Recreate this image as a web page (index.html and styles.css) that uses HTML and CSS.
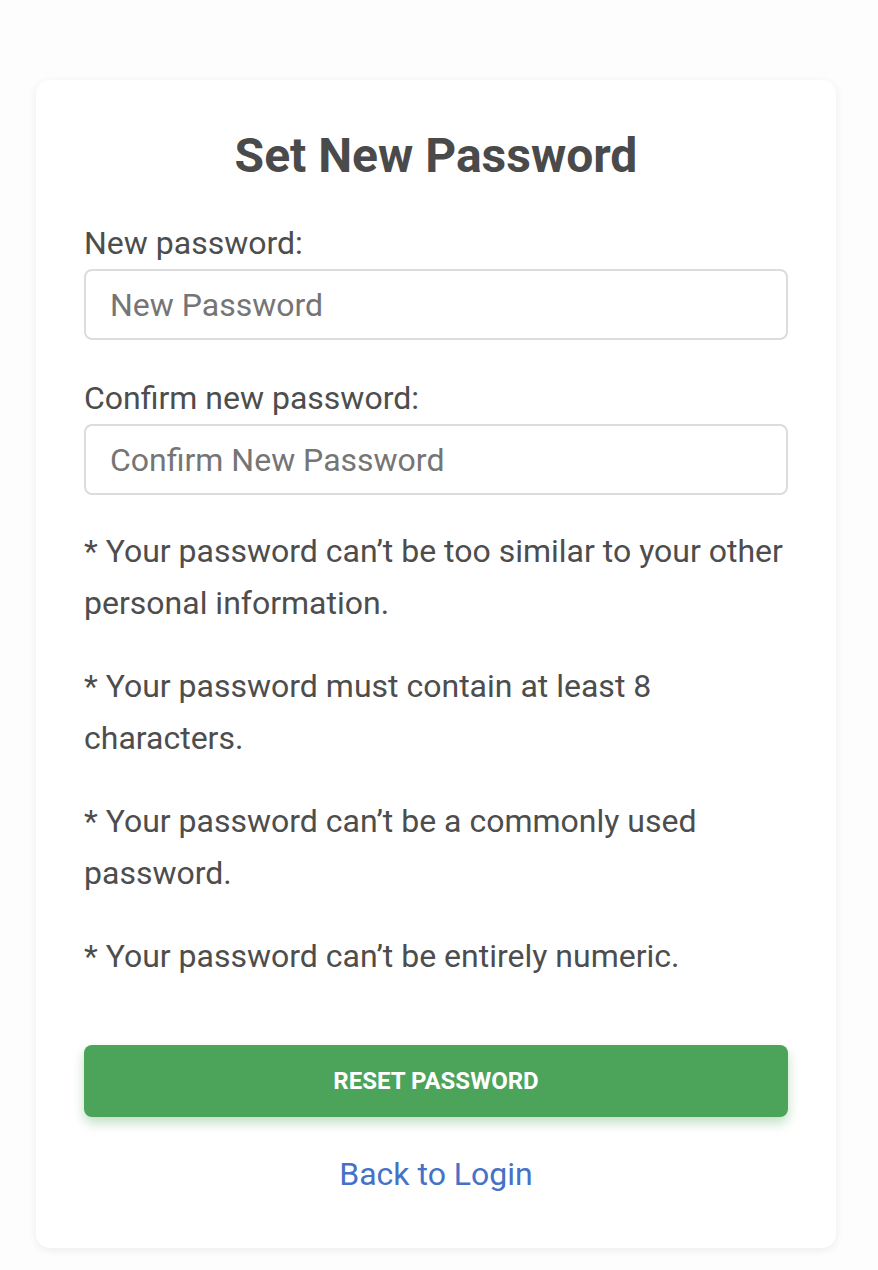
FILE: index.html
```html
<!DOCTYPE html>
<html lang="en">
<head>
<meta charset="utf-8">
<title>Set New Password</title>
<link rel="stylesheet" href="styles.css">
</head>
<body>
<main class="page">
  <form class="card">
    <h1 class="title">Set New Password</h1>
    <label class="label" for="p1">New password:</label>
    <input class="field" id="p1" type="password" placeholder="New Password">
    <label class="label label-second" for="p2">Confirm new password:</label>
    <input class="field" id="p2" type="password" placeholder="Confirm New Password">
    <div class="rules">
      <p>* Your password can’t be too similar to your other personal information.</p>
      <p>* Your password must contain at least 8 characters.</p>
      <p>* Your password can’t be a commonly used password.</p>
      <p>* Your password can’t be entirely numeric.</p>
    </div>
    <button class="btn" type="button">RESET PASSWORD</button>
    <a class="back" href="#">Back to Login</a>
  </form>
</main>
</body>
</html>
```

FILE: styles.css
```css
html, body {
  margin: 0;
  padding: 0;
  background: #fdfdfd;
}
body {
  font-family: Roboto, "Liberation Sans", Arial, sans-serif;
  color: #4d4d4d;
}
.page {
  padding: 80px 42px 22px 36px;
}
.card {
  background: #fff;
  border-radius: 14px;
  box-shadow: 0 2px 10px rgba(0, 0, 0, 0.07);
  padding: 28px 48px 54px;
  display: flex;
  flex-direction: column;
}
.title {
  margin: 0 0 19px;
  text-align: center;
  font-size: 48px;
  font-weight: 700;
  line-height: 96px;
  color: #4a4a4a;
}
.label {
  font-size: 32px;
  line-height: 40px;
  margin-bottom: 6px;
}
.label-second {
  margin-top: 38px;
}
.field {
  box-sizing: border-box;
  height: 71px;
  border: 2px solid #dcdcdc;
  border-radius: 8px;
  padding: 0 24px;
  font-family: inherit;
  font-size: 32px;
  color: #4d4d4d;
  background: #fff;
  outline: none;
}
.field::placeholder {
  color: #757575;
}
.rules {
  margin-top: 30px;
  font-size: 32px;
  line-height: 52px;
}
.rules p {
  margin: 0 0 31px;
}
.rules p:last-child {
  margin-bottom: 0;
}
.btn {
  margin-top: 63px;
  height: 72px;
  border: none;
  border-radius: 8px;
  background: #4ca35a;
  color: #fff;
  font-family: inherit;
  font-weight: 700;
  font-size: 24px;
  box-shadow: 0 6px 12px rgba(76, 163, 90, 0.35);
}
.back {
  margin-top: 37px;
  text-align: center;
  font-size: 32px;
  color: #4571c6;
  text-decoration: none;
  line-height: 40px;
}
```
